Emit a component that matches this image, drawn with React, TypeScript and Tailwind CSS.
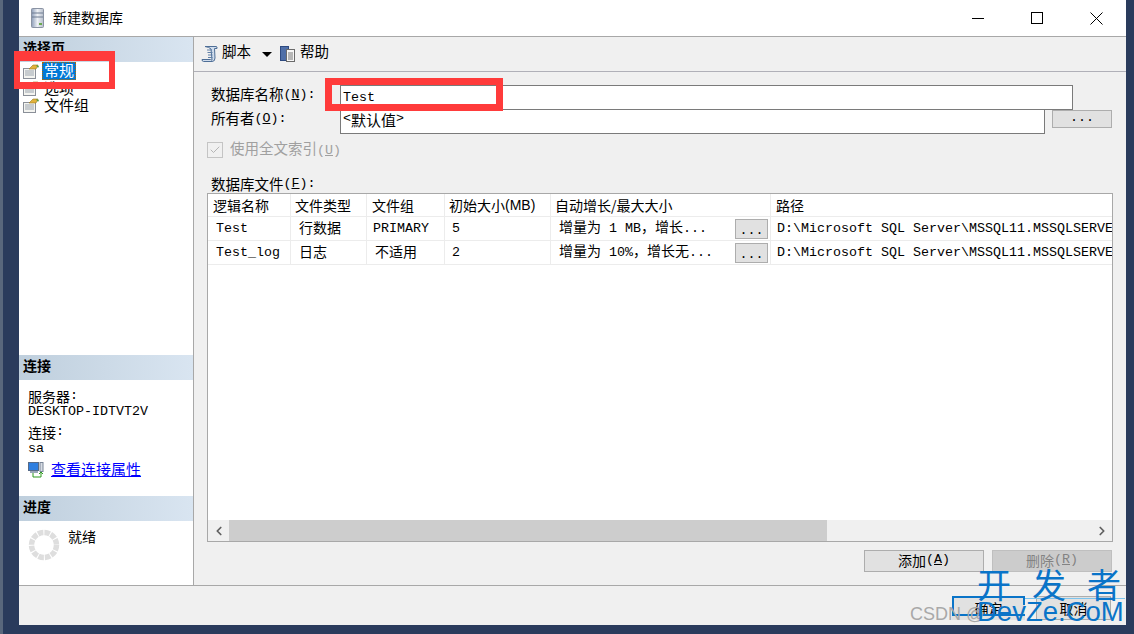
import type { ReactNode } from "react";
import { ChevronLeft, ChevronRight, Check } from "lucide-react";

// Latin text in the dialog is monospaced at half the width of a CJK glyph
const Lat = ({ children }: { children: ReactNode }) => (
  <span className="font-['Liberation_Mono',monospace] text-[13.33px] whitespace-pre">{children}</span>
);

const Key = ({ k }: { k: string }) => (
  <Lat>
    (<span className="underline">{k}</span>)
  </Lat>
);

const PageIcon = () => (
  <svg width="16" height="15" viewBox="0 0 16 15" className="shrink-0">
    <rect x="0.5" y="4.5" width="12" height="10" fill="#f4f4f0" stroke="#8a8f98" />
    <path d="M2 7h9M2 9h9M2 11h9" stroke="#9aa3ad" />
    <path d="M6 5 L10 1 L15 1 L13 5 Z" fill="#e2b23c" stroke="#9b7a1e" strokeWidth="0.6" />
    <path d="M13 1 L16 2 L15 4 Z" fill="#4d9a3c" />
  </svg>
);

const ScriptIcon = () => (
  <svg width="18" height="18" viewBox="0 0 18 18" className="shrink-0">
    <path
      d="M4 1.5 H15 Q16.5 1.5 16 3.5 H13.5 L14 13 Q14 16.5 11 16.5 H2.5 Q1 16.5 1 14.5 H9.5 Q10 15.5 11 15 L10 4 Q8 2 4 1.5 Z"
      fill="#cfdcec"
      stroke="#4e6e96"
    />
    <path d="M6 5h5M6.5 7.5h5M7 10h4.5M7 12.5h4.5" stroke="#5f7fa6" />
  </svg>
);

const HelpIcon = () => (
  <svg width="17" height="18" viewBox="0 0 17 18" className="shrink-0">
    <rect x="0.5" y="1.5" width="8" height="14" fill="#4f6fa8" stroke="#2e4a80" />
    <rect x="6.5" y="4.5" width="8" height="12" fill="#f6f6f6" stroke="#6a6a6a" />
    <path d="M8 8h5M8 10h5M8 12h5M8 14h5" stroke="#777" />
  </svg>
);

const ServerIcon = () => (
  <svg width="14" height="20" viewBox="0 0 14 20" className="shrink-0">
    <defs>
      <linearGradient id="srv" x1="0" x2="1" y1="0" y2="0">
        <stop offset="0" stopColor="#8d9db8" />
        <stop offset="0.5" stopColor="#eef1f5" />
        <stop offset="1" stopColor="#b5bdca" />
      </linearGradient>
    </defs>
    <rect x="0.5" y="0.5" width="12" height="19" rx="1" fill="url(#srv)" stroke="#8a93a3" />
    <path d="M1 5h11M1 9h11" stroke="#6f7c92" />
    <rect x="8" y="15" width="3" height="2" fill="#6aa84f" />
  </svg>
);

const ConnectionIcon = () => (
  <svg width="16" height="16" viewBox="0 0 16 16" className="shrink-0">
    <rect x="0.5" y="0.5" width="10" height="8" fill="#2f7fe0" stroke="#566a88" />
    <rect x="2" y="9" width="8" height="2" fill="#9aa7b8" />
    <rect x="12" y="0.5" width="3" height="9" fill="#d8dde4" stroke="#7a8698" />
    <path d="M5 11v4h8v-4M11 12l2-2 2 2" fill="none" stroke="#2f9a1e" />
  </svg>
);

const Spinner = () => (
  <svg width="32" height="32" viewBox="0 0 32 32" className="shrink-0">
    <circle cx="16" cy="16" r="12.5" fill="none" stroke="#dedede" strokeWidth="5.5" strokeDasharray="5.5 1.05" />
  </svg>
);

const SectionHeader = ({ title }: { title: string }) => (
  <div className="h-[25px] flex items-center pl-[4px] pb-[5px] font-bold text-[14px] text-black bg-gradient-to-r from-[#bfcfdd] to-[#d9e5f1]">
    {title}
  </div>
);

const columns = ["w-[83px]", "w-[76px]", "w-[78px]", "w-[106px]", "w-[220px]", "flex-1"];

const Cell = ({ col, className, children }: { col: number; className?: string; children: ReactNode }) => (
  <div
    className={`${columns[col]} shrink-0 h-full flex items-center overflow-hidden whitespace-nowrap border-r border-[#ececec] last:border-r-0 ${className ?? ""}`}
  >
    {children}
  </div>
);

const EllipsisButton = () => (
  <div className="ml-auto mr-[2px] w-[33px] h-[20px] shrink-0 bg-[#e1e1e1] border border-[#adadad] flex items-center justify-center pt-[4px]">
    <Lat>...</Lat>
  </div>
);

const rows = [
  { name: "Test", type: "行数据", group: <Lat>PRIMARY</Lat>, groupPad: "pl-[6px]", size: "5", growth: <>增量为<Lat> 1 MB</Lat>，增长<Lat>...</Lat></> },
  { name: "Test_log", type: "日志", group: <span className="pb-[4px]">不适用</span>, groupPad: "pl-[8px]", size: "2", growth: <>增量为<Lat> 10%</Lat>，增长无<Lat>...</Lat></> },
];

export default function App() {
  return (
    <div className="relative w-[1134px] h-[634px] overflow-hidden flex bg-[#2a3b5c] font-['Noto_Sans_CJK_SC','Liberation_Sans',sans-serif] text-[15px] text-black leading-none">
      <div className="w-[19px] shrink-0 border-l-[3px] border-[#59677c]" />

      {/* Dialog window */}
      <div className="w-[1107px] h-[625px] shrink-0 flex flex-col bg-[#f0f0f0]">
        {/* Title bar */}
        <div className="h-[37px] shrink-0 bg-white border-b border-[#a8a8a8] flex items-center">
          <div className="ml-[12px]">
            <ServerIcon />
          </div>
          <span className="ml-[8px] pb-[3px] text-[14px]">新建数据库</span>
          <div className="ml-auto flex items-center">
            <div className="w-[60px] flex justify-center">
              <div className="w-[12px] h-px bg-black" />
            </div>
            <div className="w-[58px] flex justify-center">
              <div className="w-[12px] h-[12px] border border-black" />
            </div>
            <div className="w-[60px] flex justify-center">
              <svg width="13" height="13" viewBox="0 0 13 13">
                <path d="M0.5 0.5 L12.5 12.5 M12.5 0.5 L0.5 12.5" stroke="#000" fill="none" />
              </svg>
            </div>
          </div>
        </div>

        <div className="flex-1 flex min-h-0">
          {/* Sidebar */}
          <div className="w-[175px] shrink-0 bg-white border-r border-[#a8a8a8] flex flex-col">
            <SectionHeader title="选择页" />
            <div className="flex flex-col pl-[4px]">
              <div className="h-[18px] flex items-center gap-[3px]">
                <PageIcon />
                <span className="h-[18px] px-[2px] pb-[3px] flex items-center bg-[#0078d7] text-white outline-1 outline-dotted outline-[#b06a00] -outline-offset-1">
                  常规
                </span>
              </div>
              <div className="h-[17px] flex items-center gap-[5px]">
                <PageIcon />
                <span className="pb-[2px]">选项</span>
              </div>
              <div className="h-[17px] flex items-center gap-[5px]">
                <PageIcon />
                <span className="pb-[2px]">文件组</span>
              </div>
            </div>

            <div className="mt-auto">
              <SectionHeader title="连接" />
              <div className="h-[116px] pl-[9px] pt-[9px] flex flex-col">
                <div className="h-[15px] pb-[2px] flex items-center text-[14px]">服务器<Lat>:</Lat></div>
                <div className="h-[16px] flex items-center">
                  <Lat>DESKTOP-IDTVT2V</Lat>
                </div>
                <div className="h-[16px] mt-[5px] pb-[3px] flex items-center text-[14px]">连接<Lat>:</Lat></div>
                <div className="h-[16px] flex items-center">
                  <Lat>sa</Lat>
                </div>
                <div className="mt-[4px] h-[18px] flex items-center gap-[7px]">
                  <ConnectionIcon />
                  <span className="pb-[4px] text-[15px] text-[#0000ff] underline">查看连接属性</span>
                </div>
              </div>
              <SectionHeader title="进度" />
              <div className="h-[64px] pl-[9px] pt-[8px] flex gap-[8px]">
                <Spinner />
                <span className="text-[14px]">就绪</span>
              </div>
            </div>
          </div>

          {/* Main panel */}
          <div className="flex-1 flex flex-col min-w-0">
            <div className="h-[35px] shrink-0 border-b border-[#b0b0b8] flex items-center pl-[7px]">
              <ScriptIcon />
              <span className="ml-[3px] pb-[6px] text-[14.5px]">脚本</span>
              <div className="ml-[11px] w-0 h-0 border-x-[5px] border-x-transparent border-t-[5px] border-t-black" />
              <div className="ml-[8px]">
                <HelpIcon />
              </div>
              <span className="ml-[3px] pb-[6px] text-[14.5px]">帮助</span>
            </div>

            <div className="flex items-center mt-[13px]">
              <div className="w-[146px] h-[25px] shrink-0 pl-[17px] pb-[6px] flex items-center text-[14.5px]">
                数据库名称<Key k="N" /><Lat>:</Lat>
              </div>
              <div className="w-[733px] h-[25px] bg-white border border-[#7a7a7a] flex items-center pl-[2px]">
                <Lat>Test</Lat>
              </div>
            </div>
            <div className="flex -mt-px">
              <div className="w-[146px] shrink-0 pl-[17px] pb-[6px] flex items-center text-[14.5px]">
                所有者<Key k="O" /><Lat>:</Lat>
              </div>
              <div className="w-[705px] h-[25px] bg-white border border-[#7a7a7a] flex items-center pl-[2px] pb-[5px] text-[15px]">
                <Lat>&lt;</Lat>默认值<Lat>&gt;</Lat>
              </div>
              <div className="ml-[7px] mt-[1px] w-[60px] h-[18px] bg-[#e1e1e1] border border-[#adadad] flex items-end justify-center pb-[3px]">
                <Lat>...</Lat>
              </div>
            </div>

            <div className="mt-[8px] ml-[13px] h-[16px] flex items-center">
              <div className="w-[16px] h-[16px] border border-[#c4c4c4] flex items-center justify-center">
                <Check size={12} className="text-[#b5b5b5]" />
              </div>
              <span className="ml-[7px] pb-[2px] text-[14.5px] text-[#a0a0a0]">
                使用全文索引<Key k="U" />
              </span>
            </div>

            <div className="mt-[18px] ml-[17px] h-[16px] flex items-center text-[14.5px]">
              数据库文件<Key k="F" /><Lat>:</Lat>
            </div>

            {/* Files grid */}
            <div className="mt-[1px] ml-[13px] w-[906px] flex-1 min-h-0 bg-white border border-[#a8a8a8] flex flex-col text-[14px]">
              <div className="h-[23px] shrink-0 flex border-b border-[#ececec]">
                <Cell col={0} className="pl-[5px]">逻辑名称</Cell>
                <Cell col={1} className="pl-[4px]">文件类型</Cell>
                <Cell col={2} className="pl-[5px]">文件组</Cell>
                <Cell col={3} className="pl-[4px]">
                  初始大小<span className="font-['Liberation_Sans',sans-serif] text-[14px]">(MB)</span>
                </Cell>
                <Cell col={4} className="pl-[4px]">自动增长/最大大小</Cell>
                <Cell col={5} className="pl-[5px]">路径</Cell>
              </div>
              {rows.map((r) => (
                <div key={r.name} className="h-[24px] shrink-0 flex border-b border-[#ececec]">
                  <Cell col={0} className="pl-[8px]"><Lat>{r.name}</Lat></Cell>
                  <Cell col={1} className="pl-[8px]"><span className="pb-[4px]">{r.type}</span></Cell>
                  <Cell col={2} className={r.groupPad}>{r.group}</Cell>
                  <Cell col={3} className="pl-[7px]"><Lat>{r.size}</Lat></Cell>
                  <Cell col={4} className="pl-[8px]">
                    <span className="pb-[2px]">{r.growth}</span>
                    <EllipsisButton />
                  </Cell>
                  <Cell col={5} className="pl-[6px]">
                    <Lat>D:\Microsoft SQL Server\MSSQL11.MSSQLSERVE</Lat>
                  </Cell>
                </div>
              ))}
              <div className="flex-1" />
              <div className="h-[21px] shrink-0 flex items-center bg-[#f0f0f0]">
                <div className="w-[21px] flex justify-center">
                  <ChevronLeft size={14} strokeWidth={3} className="text-[#606060]" />
                </div>
                <div className="w-[598px] h-full bg-[#cdcdcd]" />
                <div className="ml-auto w-[21px] flex justify-center">
                  <ChevronRight size={14} strokeWidth={3} className="text-[#606060]" />
                </div>
              </div>
            </div>

            <div className="mt-[8px] mb-[13px] mr-[14px] flex justify-end gap-[8px] text-[14px]">
              <div className="w-[120px] h-[22px] pb-[2px] bg-[#e1e1e1] border border-[#adadad] flex items-center justify-center">
                添加<Key k="A" />
              </div>
              <div className="w-[120px] h-[22px] pb-[2px] bg-[#cccccc] border border-[#bfbfbf] flex items-center justify-center text-[#838383]">
                删除<Key k="R" />
              </div>
            </div>
          </div>
        </div>

        {/* Footer */}
        <div className="h-[40px] shrink-0 border-t border-[#a8a8a8] flex justify-end pt-[10px] pr-[15px] gap-[11px] text-[14px]">
          <div className="w-[73px] h-[24px] bg-[#e1e1e1] flex items-center justify-center">确定</div>
          <div className="w-[75px] h-[24px] bg-[#e1e1e1] border border-[#adadad] flex items-center justify-center">取消</div>
        </div>
      </div>

      {/* Red annotation boxes */}
      <div className="absolute left-[14px] top-[51px] w-[101px] h-[38px] border-[#ff3b3b] border-x-[6px] border-t-[10px] border-b-[7px]" />
      <div className="absolute left-[325px] top-[78px] w-[178px] h-[33px] border-[7px] border-[#ff3b3b]" />

      {/* Watermark */}
      <div className="absolute left-[952px] top-[596px] w-[73px] h-[20px] border-2 border-r-0 border-[#0a74c8]" />
      <div className="absolute left-[1023px] top-[596px] w-[2px] h-[9px] bg-[#0a74c8]" />
      <div className="absolute left-[1025px] top-[598px] w-[100px] h-px bg-[#7cc4ee]" />
      <div className="absolute left-[910px] top-[605px] text-[18px] text-[#a8a8a8] font-['Liberation_Sans',sans-serif]">CSDN @</div>
      <div className="absolute left-[977px] top-[567px] flex gap-[21px] text-[34px] text-[#0a74c8]">
        <span>开</span>
        <span>发</span>
        <span>者</span>
      </div>
      <div className="absolute left-[977px] top-[598px] text-[27.5px] text-[#0a74c8] font-['Liberation_Sans',sans-serif]">DevZe.CoM</div>
    </div>
  );
}
